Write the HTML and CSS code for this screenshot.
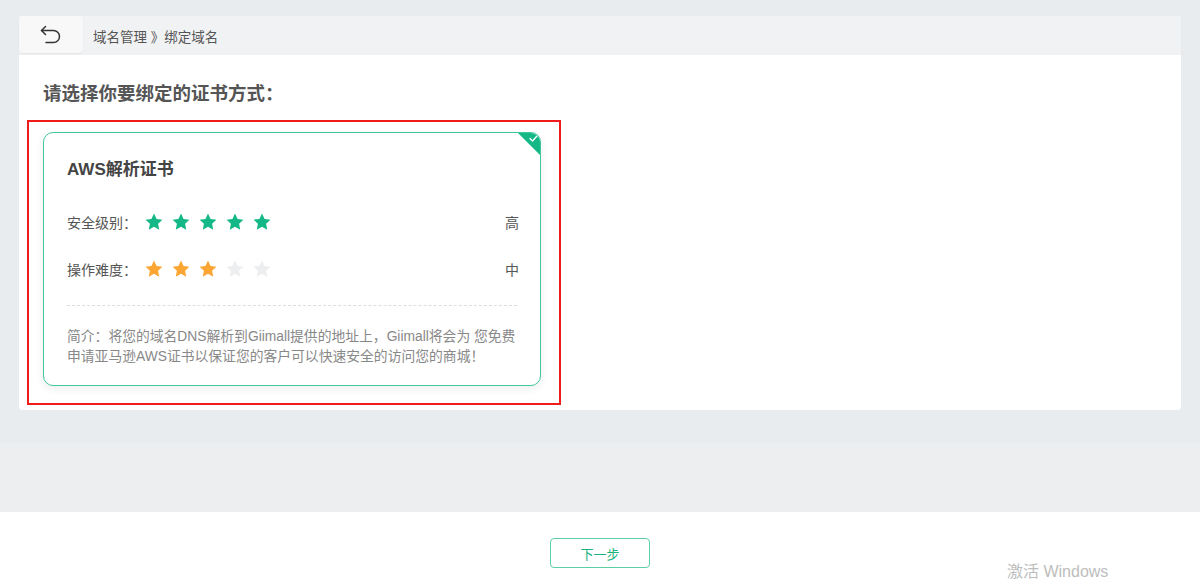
FILE: index.html
```html
<!DOCTYPE html>
<html lang="zh-CN">
<head>
    <meta charset="UTF-8">
    <meta name="viewport" content="width=device-width, initial-scale=1.0">
    <title>绑定域名</title>
    <link rel="stylesheet" href="styles.css">
</head>
<body>
    <div class="main">
        <div class="header">
            <div class="back-btn">
                <svg width="24" height="22" viewBox="0 0 24 22" fill="none" stroke="#333" stroke-width="1.5" stroke-linecap="round" stroke-linejoin="round">
                    <path d="M6.5 2.5 L2.5 6.5 L6.5 10.5"/>
                    <path d="M2.5 6.5 H14.5 a6 6 0 0 1 0 12 H7"/>
                </svg>
            </div>
            <div class="breadcrumb">域名管理 》绑定域名</div>
        </div>

        <div class="panel">
            <h2 class="panel-title">请选择你要绑定的证书方式：</h2>

            <div class="select-box">
                <div class="cert-card active">
                    <span class="corner">
                        <svg width="9" height="7" viewBox="0 0 9 7" fill="none" stroke="#fff" stroke-width="1.3" stroke-linecap="round" stroke-linejoin="round"><path d="M1 3.5 L3.5 6 L8 1"/></svg>
                    </span>
                    <div class="cert-name">AWS解析证书</div>

                    <div class="rate-row">
                        <span class="rate-label">安全级别：</span>
                        <span class="stars green">
                            <svg viewBox="0 0 24 24"><path d="M12 1.8l3.1 6.5 7 .9-5.2 4.9 1.4 7.1L12 17.7l-6.3 3.5 1.4-7.1L1.9 9.2l7-.9z"/></svg>
                            <svg viewBox="0 0 24 24"><path d="M12 1.8l3.1 6.5 7 .9-5.2 4.9 1.4 7.1L12 17.7l-6.3 3.5 1.4-7.1L1.9 9.2l7-.9z"/></svg>
                            <svg viewBox="0 0 24 24"><path d="M12 1.8l3.1 6.5 7 .9-5.2 4.9 1.4 7.1L12 17.7l-6.3 3.5 1.4-7.1L1.9 9.2l7-.9z"/></svg>
                            <svg viewBox="0 0 24 24"><path d="M12 1.8l3.1 6.5 7 .9-5.2 4.9 1.4 7.1L12 17.7l-6.3 3.5 1.4-7.1L1.9 9.2l7-.9z"/></svg>
                            <svg viewBox="0 0 24 24"><path d="M12 1.8l3.1 6.5 7 .9-5.2 4.9 1.4 7.1L12 17.7l-6.3 3.5 1.4-7.1L1.9 9.2l7-.9z"/></svg>
                        </span>
                        <span class="rate-value">高</span>
                    </div>

                    <div class="rate-row">
                        <span class="rate-label">操作难度：</span>
                        <span class="stars orange">
                            <svg viewBox="0 0 24 24"><path d="M12 1.8l3.1 6.5 7 .9-5.2 4.9 1.4 7.1L12 17.7l-6.3 3.5 1.4-7.1L1.9 9.2l7-.9z"/></svg>
                            <svg viewBox="0 0 24 24"><path d="M12 1.8l3.1 6.5 7 .9-5.2 4.9 1.4 7.1L12 17.7l-6.3 3.5 1.4-7.1L1.9 9.2l7-.9z"/></svg>
                            <svg viewBox="0 0 24 24"><path d="M12 1.8l3.1 6.5 7 .9-5.2 4.9 1.4 7.1L12 17.7l-6.3 3.5 1.4-7.1L1.9 9.2l7-.9z"/></svg>
                            <svg class="off" viewBox="0 0 24 24"><path d="M12 1.8l3.1 6.5 7 .9-5.2 4.9 1.4 7.1L12 17.7l-6.3 3.5 1.4-7.1L1.9 9.2l7-.9z"/></svg>
                            <svg class="off" viewBox="0 0 24 24"><path d="M12 1.8l3.1 6.5 7 .9-5.2 4.9 1.4 7.1L12 17.7l-6.3 3.5 1.4-7.1L1.9 9.2l7-.9z"/></svg>
                        </span>
                        <span class="rate-value">中</span>
                    </div>

                    <div class="divider"></div>

                    <p class="cert-desc">简介：将您的域名DNS解析到Giimall提供的地址上，Giimall将会为 您免费<br>申请亚马逊AWS证书以保证您的客户可以快速安全的访问您的商城！</p>
                </div>
            </div>
        </div>
    </div>

    <div class="gap-area"></div>

    <div class="footer">
        <button class="btn-next">下一步</button>
        <span class="watermark">激活 Windows</span>
    </div>
</body>
</html>
```

FILE: styles.css
```css
* {
    box-sizing: border-box;
}
body {
    margin: 0;
    height: 581px;
    font-family: "Liberation Sans", "Noto Sans CJK SC", sans-serif;
    background: #e9ecee;
    overflow: hidden;
}
.main {
    height: 443px;
    padding: 16px 19px 0;
}
.header {
    display: flex;
    align-items: center;
    height: 39px;
    background: #f1f2f4;
}
.back-btn {
    display: flex;
    align-items: center;
    justify-content: center;
    width: 64px;
    height: 37px;
    align-self: flex-start;
    background: #f8f8f9;
    border-radius: 4px;
    box-shadow: 0 1px 2px rgba(0,0,0,0.06);
}
.breadcrumb {
    margin-left: 10px;
    font-size: 13.5px;
    color: #555;
}
.panel {
    height: 355px;
    background: #fff;
    border-radius: 0 0 3px 3px;
    padding: 26px 8px 0;
}
.panel-title {
    margin: 0 0 13px 16px;
    font-size: 18.5px;
    line-height: 26px;
    font-weight: 600;
    color: #555;
}
.select-box {
    width: 534px;
    height: 285px;
    border: 2px solid #f01c1c;
    padding: 10px 14px;
}
.cert-card {
    position: relative;
    width: 498px;
    height: 254px;
    border: 1px solid #43c89c;
    border-radius: 10px;
    box-shadow: 0 3px 10px rgba(0,0,0,0.07);
    padding: 26px 21px 0 23px;
    overflow: hidden;
}
.corner {
    position: absolute;
    top: 0;
    right: 0;
    width: 0;
    height: 0;
    border-top: 22px solid #13b886;
    border-left: 22px solid transparent;
}
.corner svg {
    position: absolute;
    top: -20px;
    right: 2px;
}
.cert-name {
    font-size: 17px;
    line-height: 22px;
    font-weight: bold;
    color: #444;
}
.rate-row {
    display: flex;
    align-items: center;
    height: 24px;
    margin-top: 23px;
    font-size: 14px;
    color: #555;
}
.cert-name + .rate-row {
    margin-top: 29px;
}
.rate-label {
    width: 77px;
}
.stars {
    display: flex;
    gap: 7px;
}
.stars svg {
    width: 20px;
    height: 20px;
}
.stars.green svg {
    fill: #13b886;
}
.stars.orange svg {
    fill: #fba533;
}
.stars svg.off {
    fill: #eceeef;
}
.rate-value {
    margin-left: auto;
}
.divider {
    margin: 24px 2px 0 0;
    border-top: 1px dashed #ddd;
}
.cert-desc {
    margin: 21px -6px 0 0;
    font-size: 13.8px;
    line-height: 20px;
    color: #888;
    white-space: nowrap;
}
.gap-area {
    height: 69px;
    background: #edeef0;
}
.footer {
    position: relative;
    height: 69px;
    background: #fff;
    display: flex;
    justify-content: center;
    padding-top: 26px;
}
.btn-next {
    width: 100px;
    height: 30px;
    background: #fff;
    border: 1px solid #5ccfa6;
    border-radius: 4px;
    font-family: "Liberation Sans", "Noto Sans CJK SC", sans-serif;
    font-size: 13px;
    color: #19b27e;
}
.watermark {
    position: absolute;
    left: 1007px;
    top: 46px;
    font-family: "Liberation Sans", "Noto Sans CJK SC", sans-serif;
    font-size: 16px;
    color: #bdbdbd;
}
```
